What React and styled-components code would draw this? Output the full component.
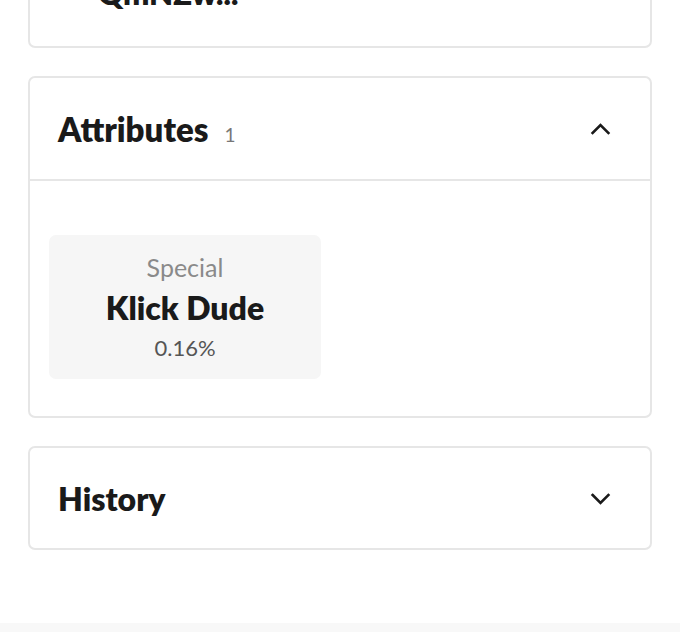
import React from "react";
import styled, { createGlobalStyle } from "styled-components";

const GlobalStyle = createGlobalStyle`
  html, body {
    margin: 0;
    padding: 0;
    background: #ffffff;
    font-family: Lato, "Noto Sans", sans-serif;
    color: #1a1a1a;
  }
`;

const Page = styled.div`
  height: 632px;
  overflow: hidden;
  display: flex;
  flex-direction: column;
`;

const Content = styled.div`
  flex: 1;
  display: flex;
  flex-direction: column;
  gap: 28px;
  padding: 0 28px;
  margin-top: -37px;
`;

const Card = styled.section`
  border: 2px solid #e6e6e6;
  border-radius: 7px;
  background: #fff;
`;

const OwnerRow = styled.div`
  display: flex;
  align-items: center;
  gap: 26px;
  padding: 14px 28px 39px;
  font-size: 31px;
  font-weight: 800;
  line-height: 28px;
`;

const Header = styled.div`
  height: ${(p) => p.$h}px;
  display: flex;
  align-items: center;
  justify-content: space-between;
  padding: 0 39px 0 28px;
  border-bottom: ${(p) => (p.$open ? "2px solid #e6e6e6" : "none")};
`;

const Title = styled.h2`
  margin: 0;
  font-size: ${(p) => p.$size || 33}px;
  font-weight: 800;
  display: flex;
  align-items: baseline;
  gap: 16px;
`;

const Count = styled.span`
  font-size: 19px;
  font-weight: 400;
  color: #777;
`;

const Body = styled.div`
  padding: 54px 20px 37px 19px;
`;

const Tile = styled.div`
  width: 272px;
  height: 144px;
  box-sizing: border-box;
  background: #f6f6f6;
  border-radius: 7px;
  display: flex;
  flex-direction: column;
  align-items: center;
  justify-content: center;
  gap: 8px;
`;

const TraitType = styled.div`
  font-size: 25px;
  line-height: 30px;
  color: #8a8a8a;
`;

const TraitValue = styled.div`
  font-size: 32px;
  line-height: 36px;
  font-weight: 800;
  color: #1a1a1a;
`;

const Rarity = styled.div`
  font-size: 22px;
  line-height: 28px;
  color: #555;
`;

const Footer = styled.div`
  height: 9px;
  background: #f8f8f8;
`;

const Chevron = ({ up }) => (
  <svg width="21" height="21" viewBox="0 0 24 24" fill="none" stroke="#1a1a1a"
       strokeWidth="3" strokeLinecap="square">
    <path d={up ? "M3 17 L12 8 L21 17" : "M3 8 L12 17 L21 8"} />
  </svg>
);

const Dot = () => (
  <svg width="14" height="14" viewBox="0 0 14 14" fill="none" stroke="#1a1a1a" strokeWidth="3">
    <circle cx="7" cy="7" r="5" />
  </svg>
);

export default function App() {
  return (
    <Page>
      <GlobalStyle />
      <Content>
        <Card>
          <OwnerRow>
            <Dot />
            <span>QmNZw...</span>
          </OwnerRow>
        </Card>
        <Card>
          <Header $h={101} $open>
            <Title>
              Attributes <Count>1</Count>
            </Title>
            <Chevron up />
          </Header>
          <Body>
            <Tile>
              <TraitType>Special</TraitType>
              <TraitValue>Klick Dude</TraitValue>
              <Rarity>0.16%</Rarity>
            </Tile>
          </Body>
        </Card>
        <Card>
          <Header $h={100}>
            <Title $size={32}>History</Title>
            <Chevron />
          </Header>
        </Card>
      </Content>
      <Footer />
    </Page>
  );
}
